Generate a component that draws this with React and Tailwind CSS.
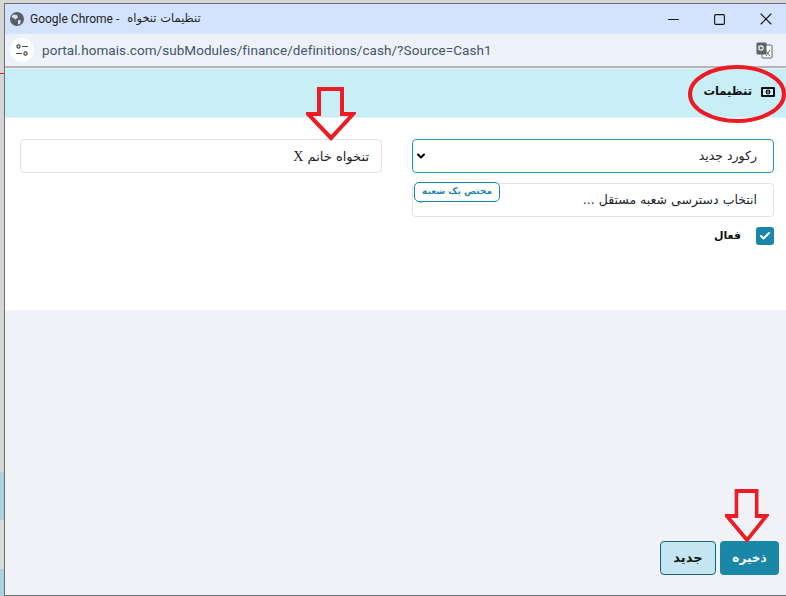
import { Minus, Square, X, ChevronDown, Check } from "lucide-react";

function RedArrow({ className, width = 50, height = 54 }) {
  return (
    <svg className={className} width={width} height={height} viewBox="0 0 50 54" preserveAspectRatio="none" fill="none">
      <path d="M13 2H36V27H47L25 51L2 27H13Z" stroke="#ed1c24" strokeWidth="4" fill="none" />
    </svg>
  );
}

function LeftStrip() {
  return (
    <div className="flex h-full w-[4px] shrink-0 flex-col bg-[#d6d6d6]">
      <div className="h-[73px]" />
      <div className="h-[1px] bg-[#ed1c24]" />
      <div className="h-[398px]" />
      <div className="h-[48px] bg-[#a9d2de]" />
      <div className="h-[49px] bg-[#dcdcdc]" />
      <div className="h-[27px] bg-[#a9d2de]" />
    </div>
  );
}

function TitleBar() {
  return (
    <div className="flex h-[30px] items-center bg-[#d3e3fd] pl-[5px]">
      <svg width="14" height="14" viewBox="0 0 14 14" className="shrink-0">
        <circle cx="7" cy="7" r="7" fill="#5a5f66" />
        <path d="M3 2.5 L7 3 L8 5.5 L5.5 7.5 L3.5 6 L1.5 5 Z M8 8 L11 8.5 L10 12 L8 12.5 Z" fill="#d3e3fd" />
      </svg>
      <div className="ml-[6px] flex items-center gap-[8px] font-['Roboto','DejaVu_Sans',sans-serif] text-[12px] text-[#1f1f1f]">
        <span>Google Chrome -</span>
        <span dir="rtl" className="font-['DejaVu_Sans',sans-serif] text-[11.5px]">تنظیمات تنخواه</span>
      </div>
      <div className="ml-auto flex items-center text-[#111]">
        <Minus size={17} strokeWidth={1.6} />
        <Square size={13} strokeWidth={2} className="ml-[31px]" />
        <X size={20} strokeWidth={1.3} className="ml-[30px] mr-[10px]" />
      </div>
    </div>
  );
}

function AddressBar() {
  return (
    <div className="flex h-[32px] items-center bg-[#edf2fa] pl-[5px]">
      <div className="flex h-[24px] w-[24px] items-center justify-center rounded-full bg-white">
        <svg width="14" height="12" viewBox="0 0 14 12" fill="none" stroke="#444746" strokeWidth="1.2">
          <circle cx="3.5" cy="2.5" r="1.6" />
          <path d="M7 2.5H13M1 9.5H7" />
          <circle cx="10.5" cy="9.5" r="1.6" />
        </svg>
      </div>
      <span className="ml-[8px] font-['Roboto',sans-serif] text-[13.5px] tracking-[0.06px] text-[#44546a]">
        portal.homais.com/subModules/finance/definitions/cash/?Source=Cash1
      </span>
      <svg width="17" height="17" viewBox="0 0 17 17" className="ml-auto mr-[13px]">
        <rect x="6" y="3" width="10" height="13" rx="1" fill="#fff" stroke="#5f6368" />
        <rect x="0.5" y="0.5" width="10" height="12" rx="1" fill="#5f6368" />
        <circle cx="5" cy="6" r="2.2" fill="none" stroke="#fff" strokeWidth="1.2" />
        <path d="M9 8L14 14M14 8L10 14" stroke="#5f6368" strokeWidth="1" />
      </svg>
    </div>
  );
}

function Field({ children, className }) {
  return (
    <div className={`flex h-[34px] items-center rounded-[4px] border bg-white text-[12.5px] text-[#212529] ${className}`}>
      {children}
    </div>
  );
}

export default function App() {
  return (
    <div className="flex h-[596px] w-[786px] overflow-hidden bg-[#d6d6d6] font-['Open_Sans','DejaVu_Sans',sans-serif]">
      <LeftStrip />
      <div className="relative mt-[3px] flex min-w-0 flex-1 flex-col border-t border-l border-b border-[#6b6f75]">
        <TitleBar />
        <AddressBar />
        <div className="h-[3px] border-t-2 border-[#b5b5b5] bg-[#edf2fa]" />
        <div dir="rtl" className="flex h-[49px] items-center gap-[9px] border-b border-[#e6f4f8] bg-[#c8eef6] pr-[11px] pb-[3px] font-['DejaVu_Sans',sans-serif]">
          <svg width="14" height="10" viewBox="0 0 14 10">
            <rect width="14" height="10" rx="1" fill="#111" />
            <rect x="2" y="2" width="10" height="6" fill="#c8eef6" />
            <circle cx="7" cy="5" r="2.4" fill="#111" />
            <rect x="6.5" y="3.5" width="1" height="3" fill="#c8eef6" />
          </svg>
          <span className="text-[11.5px] font-bold text-[#111]">تنظیمات</span>
        </div>

        <div dir="rtl" className="h-[192px] bg-white pt-[21px] pr-[12px] pl-[15px] font-['DejaVu_Sans',sans-serif]">
          <div className="grid grid-cols-2 gap-x-[30px]">
            <div className="flex flex-col gap-[10px]">
              <Field className="justify-between border-[#17a2b8] pr-[16px] pl-[2px]">
                <span>رکورد جدید</span>
                <ChevronDown size={12} strokeWidth={4} className="text-black" />
              </Field>
              <div className="relative">
                <Field className="justify-between border-[#e3e3e3] pr-[16px] pl-[2px]">
                  <span>انتخاب دسترسی شعبه مستقل ...</span>
                  <ChevronDown size={12} strokeWidth={4} className="text-black" />
                </Field>
                <span className="absolute top-[-1px] left-[2px] flex h-[20px] w-[86px] items-center justify-center rounded-[5px] border border-[#1a86a8] bg-white text-[9px] font-bold text-[#1a86a8]">
                  مختص یک شعبه
                </span>
              </div>
              <div className="flex items-center gap-[15px]">
                <div className="flex h-[18px] w-[18px] items-center justify-center rounded-[3px] bg-[#1a86a8]">
                  <Check size={12} strokeWidth={4} className="text-white" />
                </div>
                <span className="text-[11px] font-bold text-[#111]">فعال</span>
              </div>
            </div>
            <div>
              <Field className="border-[#e3e3e3] pr-[12px]">
                <span className="text-[13px]">
                  تنخواه خانم <span className="font-['Liberation_Serif',serif] text-[14px]">X</span>
                </span>
              </Field>
            </div>
          </div>
        </div>

        <div dir="rtl" className="flex flex-1 items-end gap-[4px] bg-[#f0f2f8] pr-[7px] pb-[20px] font-['DejaVu_Sans',sans-serif]">
          <button className="h-[34px] w-[59px] rounded-[4px] bg-[#1a86a8] text-[12px] font-bold text-white">
            ذخیره
          </button>
          <button className="h-[34px] w-[56px] rounded-[4px] border border-[#1f6379] bg-[#c3e6f1] text-[13px] font-bold text-[#111]">
            جدید
          </button>
        </div>

        {/* annotations drawn over the screenshot */}
        <RedArrow className="absolute top-[83px] left-[301px]" />
        <RedArrow className="absolute top-[485px] left-[720px]" width={44} height={54} />
        <svg className="absolute top-[59px] left-[680px]" width="104" height="62" viewBox="0 0 104 62" fill="none">
          <ellipse cx="52" cy="31" rx="47" ry="27" stroke="#ed1c24" strokeWidth="4" />
        </svg>
      </div>
    </div>
  );
}
